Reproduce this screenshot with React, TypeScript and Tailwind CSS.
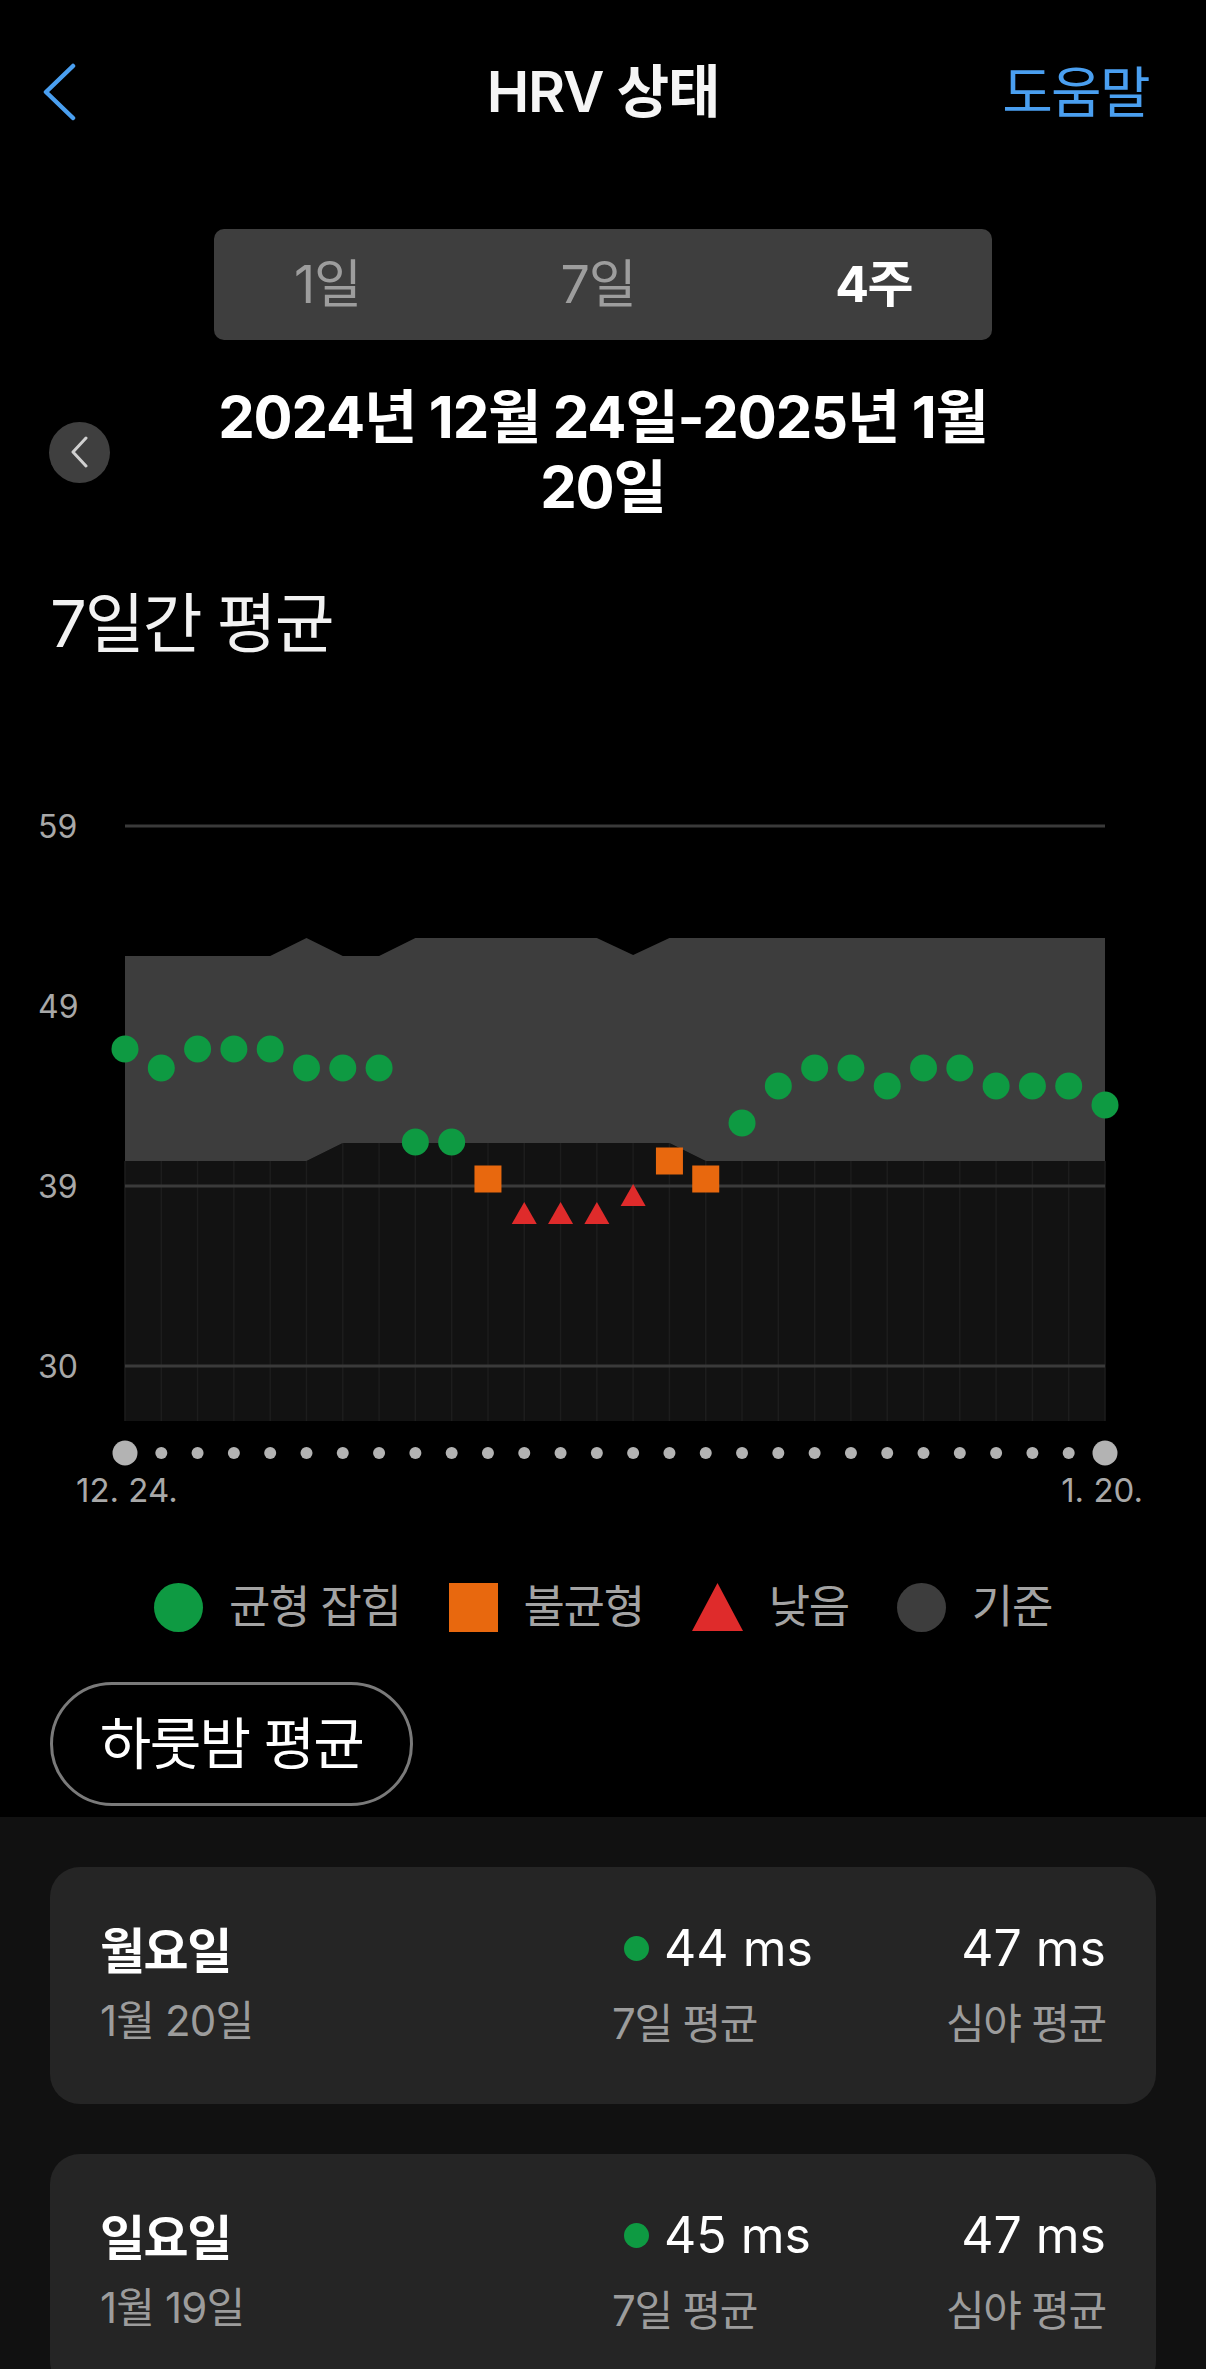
import { Fragment } from 'react';

type Kind = 'g' | 'o' | 'r';

const X0 = 125;
const STEP = 980 / 27;
const xAt = (i: number) => X0 + i * STEP;

// local svg coords (svg top sits at page y 780)
const bandTop = [175, 175, 175, 175, 175, 157, 175, 175, 157, 157, 157, 157, 157, 157, 174, ...Array(13).fill(157)];
const bandBottom = [...Array(6).fill(380), ...Array(10).fill(362), ...Array(12).fill(380)];

const series: [Kind, number][] = [
  ['g', 268], ['g', 287], ['g', 268], ['g', 268], ['g', 268], ['g', 287], ['g', 287], ['g', 287], ['g', 361], ['g', 361],
  ['o', 398], ['r', 432], ['r', 432], ['r', 432], ['r', 414], ['o', 380], ['o', 398],
  ['g', 342], ['g', 305], ['g', 287], ['g', 287], ['g', 305], ['g', 287], ['g', 287], ['g', 305], ['g', 305], ['g', 305], ['g', 324],
];

const GREEN = '#0e9a42';
const ORANGE = '#e8680e';
const RED = '#df2b2b';

const yLabels = [
  { v: '59', y: 45 },
  { v: '49', y: 225 },
  { v: '39', y: 405 },
  { v: '30', y: 585 },
];

const days = [
  { day: '월요일', date: '1월 20일', week: '44 ms', night: '47 ms' },
  { day: '일요일', date: '1월 19일', week: '45 ms', night: '47 ms' },
];

function Marker({ kind, x, y }: { kind: Kind; x: number; y: number }) {
  if (kind === 'g') return <circle cx={x} cy={y} r={13.5} fill={GREEN} />;
  if (kind === 'o') return <rect x={x - 13.5} y={y - 13.5} width={27} height={27} fill={ORANGE} />;
  return <polygon points={`${x},${y - 11} ${x + 12.5},${y + 11} ${x - 12.5},${y + 11}`} fill={RED} />;
}

function HrvChart() {
  const top = bandTop.map((y, i) => `${xAt(i)},${y}`).join(' ');
  const bottom = bandBottom.map((y, i) => `${xAt(i)},${y}`).reverse().join(' ');
  const darkTop = bandBottom.map((y, i) => `${xAt(i)},${y}`).join(' ');

  return (
    <svg width={1206} height={690} className="block">
      <polygon points={`${darkTop} ${xAt(27)},640 ${X0},640`} fill="#121212" />
      {bandBottom.map((y, i) => (
        <line key={i} x1={xAt(i)} x2={xAt(i)} y1={y} y2={640} stroke="#1d1d1d" strokeWidth={1.5} />
      ))}
      {yLabels.map((l) => (
        <line key={l.v} x1={X0} x2={1105} y1={l.y} y2={l.y} stroke="#3a3a3a" strokeWidth={3} />
      ))}
      <polygon points={`${top} ${bottom}`} fill="#3d3d3d" />
      {yLabels.map((l) => (
        <text key={l.v} x={38} y={l.y} dominantBaseline="central" fontSize={32} fill="#a8a8a8">
          {l.v}
        </text>
      ))}
      {series.map(([k, y], i) => (
        <Marker key={i} kind={k} x={xAt(i)} y={y} />
      ))}
      {series.map((_, i) => (
        <circle
          key={i}
          cx={xAt(i)}
          cy={672}
          r={i === 0 || i === 27 ? 12.5 : 6}
          fill="#b3b3b3"
        />
      ))}
    </svg>
  );
}

function Legend() {
  const items = [
    { label: '균형 잡힘', icon: <span className="w-[49px] h-[49px] rounded-full bg-[#0e9a42]" /> },
    { label: '불균형', icon: <span className="w-[49px] h-[49px] bg-[#e8680e]" /> },
    {
      label: '낮음',
      icon: (
        <svg width={51} height={48} viewBox="0 0 51 48">
          <polygon points="25.5,0 51,48 0,48" fill={RED} />
        </svg>
      ),
    },
    { label: '기준', icon: <span className="w-[49px] h-[49px] rounded-full bg-[#3d3d3d]" /> },
  ];
  return (
    <div className="mt-[71px] flex items-center justify-center gap-[48px] h-[50px]">
      {items.map((it) => (
        <div key={it.label} className="flex items-center gap-[26px]">
          {it.icon}
          <span className="text-[45px] leading-[50px] tracking-[-0.03em] text-[#a3a3a3]">{it.label}</span>
        </div>
      ))}
    </div>
  );
}

function DayCard({ day, date, week, night }: (typeof days)[number]) {
  return (
    <div className="h-[237px] rounded-[30px] bg-[#252525] px-[50px] flex items-center">
      <div className="flex-1">
        <div className="text-[49px] leading-[69px] font-bold tracking-[-0.03em] text-white">{day}</div>
        <div className="text-[42px] leading-[69px] tracking-[-0.02em] text-[#9c9c9c]">{date}</div>
      </div>
      <div className="w-[300px]">
        <div className="flex items-center h-[75px] pl-[12px] gap-[15px]">
          <span className="w-[25px] h-[25px] rounded-full bg-[#0e9a42]" />
          <span className="text-[50px] text-white">{week}</span>
        </div>
        <div className="h-[75px] flex items-center text-[42px] tracking-[-0.03em] text-[#9c9c9c]">7일 평균</div>
      </div>
      <div className="w-[194px] text-right">
        <div className="h-[75px] flex items-center justify-end text-[50px] text-white">{night}</div>
        <div className="h-[75px] flex items-center justify-end text-[42px] tracking-[-0.03em] text-[#9c9c9c]">심야 평균</div>
      </div>
    </div>
  );
}

export default function App() {
  return (
    <div className="w-[1206px] h-[2369px] overflow-hidden bg-black font-['Inter','Noto_Sans_CJK_KR',sans-serif]">
      <header className="h-[184px] flex items-center justify-between pl-[42px] pr-[57px] relative">
        <svg width={34} height={58} viewBox="0 0 34 58">
          <polyline points="31,3 4,29 31,55" fill="none" stroke="#4a9ff0" strokeWidth={4.5} strokeLinecap="round" strokeLinejoin="round" />
        </svg>
        <h1 className="absolute left-1/2 -translate-x-1/2 text-[57px] leading-[68px] font-semibold tracking-[-0.02em] text-[#f5f5f5]">
          HRV 상태
        </h1>
        <span className="text-[55px] leading-[68px] tracking-[-0.03em] text-[#4a9ff0]">도움말</span>
      </header>

      <div className="mt-[45px] mx-auto w-[778px] h-[111px] rounded-[10px] bg-[#3e3e3e] flex items-center justify-between px-[80px]">
        <span className="text-[52px] text-[#9d9d9d] tracking-[-0.02em]">1일</span>
        <span className="text-[52px] text-[#9d9d9d] tracking-[-0.02em]">7일</span>
        <span className="text-[50px] font-bold text-white tracking-[-0.03em]">4주</span>
      </div>

      <div className="mt-[42px] flex items-center pl-[49px] pr-[110px]">
        <button type="button" className="w-[61px] h-[61px] rounded-full bg-[#3f3f3f] flex items-center justify-center shrink-0">
          <svg width={20} height={32} viewBox="0 0 20 32">
            <polyline points="16,2 3,16 16,30" fill="none" stroke="#d0d0d0" strokeWidth={3} strokeLinecap="round" strokeLinejoin="round" />
          </svg>
        </button>
        <div className="flex-1 text-center text-[58px] leading-[70px] font-bold tracking-[-0.02em] text-white">
          2024년 12월 24일-2025년 1월
          <br />
          20일
        </div>
      </div>

      <h2 className="mt-[62px] pl-[50px] text-[65px] leading-[80px] tracking-[-0.03em] text-[#f2f2f2]">7일간 평균</h2>

      <div className="mt-[117px]">
        <HrvChart />
        <div className="h-[40px] flex items-center justify-between pl-[76px] pr-[63px] text-[33px] text-[#a8a8a8]">
          <span>12. 24.</span>
          <span>1. 20.</span>
        </div>
      </div>

      <Legend />

      <div className="pt-[50px] pb-[11px] pl-[50px]">
        <button
          type="button"
          className="w-[363px] h-[124px] rounded-full border-[3px] border-[#7a7a7a] text-[56px] tracking-[-0.03em] text-white"
        >
          하룻밤 평균
        </button>
      </div>

      <section className="bg-[#111111] px-[50px] pt-[50px] flex flex-col gap-[50px] h-full">
        {days.map((d) => (
          <Fragment key={d.day}>
            <DayCard {...d} />
          </Fragment>
        ))}
      </section>
    </div>
  );
}
